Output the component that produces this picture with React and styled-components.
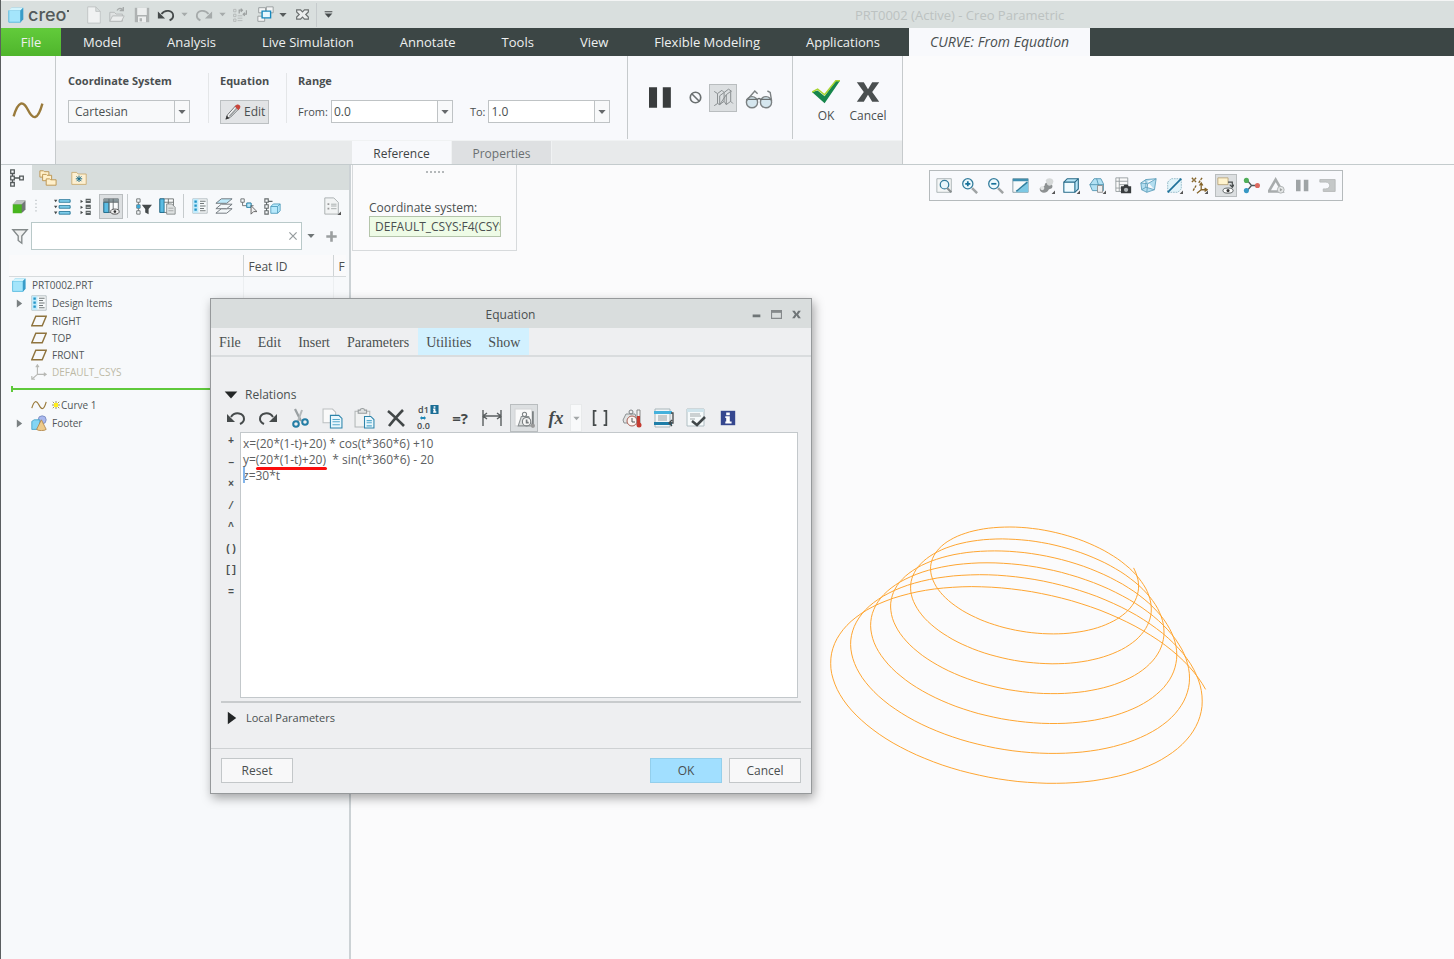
import React, { useState } from 'react';
import styled, { createGlobalStyle, css } from 'styled-components';

const GlobalStyle = createGlobalStyle`
  * {
    box-sizing: border-box;
  }

  body {
    margin: 0;
    background: #fbfbfc;
    color: #4a4f50;
    font-family: "Open Sans", "Noto Sans", sans-serif;
    font-size: 12px;
    line-height: 16px;
  }

  button, input, select, textarea {
    font: inherit;
    color: inherit;
    margin: 0;
    padding: 0;
    border-radius: 0;
    outline: none;
  }

  button {
    border: 0;
    background: none;
  }
`;

// all glyphs are drawn on a 20x20 grid
const glyphs = {
  cube: <><path d="M2 6l3-4h13v12l-3 4H2z" fill="#4fb7e0"/><path d="M2 5h13v13H2z" fill="#a4e5fb" stroke="#5cbbe0"/><path d="M2 5l3-3h13l-3 3z" fill="#d3f4fd"/><path d="M15 5l3-3v13l-3 3z" fill="#3a9cc8"/></>,
  file: <path d="M3 1h9l5 5v13H3zM12 1v5h5" fill="#f0f2f2" stroke="#bfc3c3"/>,
  open: <><path d="M2 17V7h5l2 2h7v8z" fill="#dfe2e2" stroke="#b4b8b8"/><path d="M2 17l3-6h13l-3 6z" fill="#ebeded" stroke="#b4b8b8"/><path d="M10 5c2-3 4-3 6-1M17 1v4h-4" fill="none" stroke="#a5a9a9" strokeWidth="1.5"/></>,
  save: <><path d="M1 1h18v18H1z" fill="#aeb2b2"/><path d="M4 1h12v9H4zM5 12h10v7H5z" fill="#eceeee"/><path d="M7 14h3v4H7z" fill="#aeb2b2"/></>,
  undo: <><path d="M5 9c4-6 13-4 13 2 0 3-2 4-4 5" fill="none" stroke="currentColor" strokeWidth="2"/><path d="M1 6v8h8z" fill="currentColor"/></>,
  redo: <><path d="M15 9C11 3 2 5 2 11c0 3 2 4 4 5" fill="none" stroke="currentColor" strokeWidth="2"/><path d="M19 6v8h-8z" fill="currentColor"/></>,
  regen: <><path d="M2 3h3v3H2zM2 9h3v3H2zM2 15h3v3H2zM7 11h6M7 14h6M7 17h6" fill="none" stroke="#b0b4b4"/><path d="M9 8V4h4M11 2l2 2-2 2M18 4v5h-4M16 7l-2 2 2 2" fill="none" stroke="#9da1a1" strokeWidth="1.5"/></>,
  windows: <><path d="M2 2h8v6H2zM11 1h8v7h-8zM1 12h8v6H1z" fill="#f4f5f5" stroke="#8f9596"/><path d="M6 6h10v8H6z" fill="#e9f8ff" stroke="#1688bd" strokeWidth="1.6"/></>,
  closeWin: <path d="M1 3h6l3 3 3-3h6v3l-4 4 4 4v3h-6l-3-3-3 3H1v-3l4-4-4-4z" fill="#eceeee" stroke="#6c7070" strokeWidth="1.8"/>,
  more: <path d="M3 4h14v2H3zM3 8h14l-7 8z" fill="#454a4b"/>,
  wave: <path d="M1 14C4 4 7 4 10 10s6 7 9-4" fill="none" stroke="#9a7b3c" strokeWidth="1.5"/>,
  pencil: <><path d="M2 18l2-5L13 3l4 3L7 16z" fill="#f5f5f5" stroke="#63686a"/><path d="M6 15L15 5" stroke="#9ba0a2" strokeWidth="2"/><path d="M12 4l2-2c2-1 5 1 4 3l-2 3z" fill="#c9463c"/><path d="M2 18l1-4 3 3z" fill="#333"/></>,
  pause: <path d="M0 1h7v18H0zM12 1h7v18h-7z" fill="currentColor"/>,
  no: <><circle cx="10" cy="10" r="7" fill="none" stroke="#6b7071" strokeWidth="2.2"/><path d="M5 5l10 10" stroke="#6b7071" strokeWidth="2.2"/></>,
  preview: <path d="M2 4l3 2v9l-3 2M5 6l4-3 2 2 4-3 3 2M7 16V8l4-3v8zM7 16l6-9v9l4-3V4M13 7l4-3M13 16l-2-3M17 13l2 2M5 15l2 1" fill="none" stroke="#898e90" strokeWidth="0.9"/>,
  glasses: <><circle cx="5" cy="13" r="4" fill="#d5e6ee" stroke="#7b8082"/><circle cx="15" cy="13" r="4" fill="#d5e6ee" stroke="#7b8082"/><path d="M1 11h8c0-1 2-1 2 0h8" fill="none" stroke="#6a6f71"/><path d="M1 12L7 5l2 2M19 12l-1-6-2-1" fill="none" stroke="#7b8082"/></>,
  check: <><path d="M0 10l4-1 5 4 8-11h3L9 18z" fill="#17864c"/><path d="M0 10l4-2 5 4 8-10h3" fill="none" stroke="#a7d52f" strokeWidth="1"/></>,
  cross: <path d="M2 3h5l3 5 3-5h5l-5 7 5 7h-5l-3-5-3 5H2l5-7z" fill="currentColor"/>,
  modelTree: <path d="M3 1h4v4H3zM3 8h4v4H3zM3 15h4v4H3zM5 5v3M5 12v3M7 10h6M13 8h4v4h-4z" fill="none" stroke="#53595a" strokeWidth="1.4"/>,
  folders: <g fill="#fff0cb" stroke="#ba924c"><path d="M1 2h4l1 1h5v6H1z"/><path d="M4 6h4l1 1h5v6H4z"/><path d="M8 11h4l1 1h6v6H8z"/></g>,
  favorites: <><path d="M1 3h6l2 2h10v13H1z" fill="#fdf0d2" stroke="#c5a467"/><path d="M10 7v8M6 11h8M7 8l6 6M13 8l-6 6" stroke="#176889" strokeWidth="1.2"/></>,
  greenCube: <><path d="M2 7l4-5h12v12l-4 4H2z" fill="#707675"/><path d="M1 7h12v12H1z" fill="#48b51f"/><path d="M1 7l5-5h12l-5 5z" fill="#bdc3c0"/></>,
  grip: <path d="M9 1h2v2H9zM9 6h2v2H9zM9 11h2v2H9zM9 16h2v2H9z" fill="#bcc2c5"/>,
  expand: <><path d="M0 2h4l-2 3zM0 9h4l-2 3zM0 16h4l-2 3z" fill="#454a4b"/><path d="M6 2h13v3H6zM6 9h13v3H6zM6 16h13v3H6z" fill="#8bd8f5" stroke="#176b8f"/></>,
  collapse: <><path d="M3 2v4l3-2zM3 9v4l3-2zM3 15v4l3-2z" fill="#454a4b"/><path d="M9 1h6v5H9zM9 8h6v5H9zM9 15h6v5H9z" fill="#5a6061"/><path d="M10 3h4M10 11h4M10 17h4" stroke="#e4e7e8"/></>,
  columns: <><path d="M1 1h17v16H1z" fill="#fbfcfc" stroke="#60686a"/><path d="M1 1h17v4H1z" fill="#89979b"/><path d="M1 5h6v12H1z" fill="#5cbce2" stroke="#176b8f"/><path d="M7 1v16M12 1v12M1 5h17" stroke="#60686a"/><ellipse cx="14" cy="16" rx="5" ry="3" fill="#eee" stroke="#444"/><circle cx="14" cy="16" r="1.5" fill="#333"/></>,
  treeFilter: <><path d="M2 1h4v4H2zM2 8h4v4H2zM2 15h4v4H2zM4 5v3M4 12v3" fill="none" stroke="#656b6c"/><path d="M2 8h4v4H2z" fill="#3ca8d5"/><path d="M8 8h12l-4 5v6l-4-2v-4z" fill="#454a4b"/></>,
  sheetCols: <><path d="M1 1h16v16H1z" fill="#fafbfb" stroke="#656b6c"/><path d="M1 1h5v16H1z" fill="#5cbce2" stroke="#176b8f"/><path d="M6 5h11M11 1v10" stroke="#656b6c"/><path d="M9 7h6l4 4v8H9z" fill="#dfe2e2" stroke="#7f8485"/><path d="M11 12h6M11 15h6" stroke="#9ea2a2"/></>,
  designItems: <><path d="M1 1h18v18H1z" fill="#f5f8f9" stroke="#aab4b7"/><path d="M1 1h7v18H1z" fill="#c2eafa"/><path d="M3 3h3v3H3zM3 8h3v3H3zM3 13h3v3H3z" fill="#2195c7"/><path d="M10 4h7M10 7h5M10 10h7M10 13h5M10 16h7" stroke="#73797b" strokeWidth="1.3"/></>,
  layers: <g fill="#f3f7f9" stroke="#6a7276"><path d="M1 18l6-5h12l-6 5z"/><path d="M1 13l6-5h12l-6 5z"/><path d="M1 7l6-5h12l-6 5z" fill="#bde9fa"/></g>,
  network: <><path d="M1 1h4v4H1zM8 6h5v5H8zM3 5v4h5M13 9h3" fill="none" stroke="#626869"/><path d="M8 6h5v5H8z" fill="#bce7f7" stroke="#218bb8"/><path d="M13 9v10l3-3h4z" fill="#eee" stroke="#555"/></>,
  treeCube: <><path d="M1 1h4v4H1zM1 8h4v4H1zM1 15h4v4H1zM3 5v3M3 12v3M5 4h5" fill="none" stroke="#656b6c" strokeWidth="1.3"/><path d="M8 10l3-3h8v8l-3 3H8z" fill="#b8eafc" stroke="#4b9bbb"/><path d="M8 10h8v8M16 10l3-3" fill="none" stroke="#4b9bbb"/></>,
  listDoc: <><path d="M2 1h10l5 5v13H2z" fill="#f2f4f4" stroke="#a6acad"/><path d="M5 7h2v2H5zM5 12h2v2H5z" fill="#999"/><path d="M9 8h6M9 10h6M9 13h6" stroke="#a2a8a8"/><path d="M20 16v4h-4z" fill="#555"/></>,
  funnel: <path d="M2 3h16l-6 7v8l-4-3v-5z" fill="#eff0f0" stroke="#83898a" strokeWidth="1.5"/>,
  plus: <path d="M8 2h4v6h6v4h-6v6H8v-6H2V8h6z" fill="currentColor"/>,
  clear: <path d="M4 4l12 12M16 4L4 16" stroke="#959b9d" strokeWidth="2"/>,
  down: <path d="M1 5h18l-9 10z" fill="currentColor"/>,
  right: <path d="M4 1v18l12-9z" fill="currentColor"/>,
  plane: <path d="M6 4h13l-5 12H1z" fill="none" stroke="#8f743e" strokeWidth="1.8"/>,
  csys: <path d="M8 2v11h10M8 13l-7 6M6 4l2-3 2 3M16 11l3 2-3 2M1 15v4h4" fill="none" stroke="#b7b8b4" strokeWidth="1.4"/>,
  spark: <><path d="M10 0v20M0 10h20M2 2l16 16M18 2L2 18" stroke="#8a8332" strokeWidth="2"/><path d="M5 5h10v10H5z" fill="#ffee1c"/></>,
  footer: <><circle cx="14" cy="6" r="5" fill="#a9b8ee" stroke="#7486bb"/><path d="M1 8l3-2h7v9l-3 3H1z" fill="#83d5f4" stroke="#3d9cc4"/><path d="M13 6l6 12c-2 2-10 2-12 0z" fill="#eecb8b" stroke="#ae8142"/></>,
  zoomFit: <><path d="M1 2h17v16H1z" fill="#f4f6f6" stroke="#a2abae"/><circle cx="10" cy="9" r="5" fill="#e8f6fb" stroke="#347d9d" strokeWidth="1.5"/><path d="M13 13l5 5" stroke="#8a8f90" strokeWidth="2.5"/></>,
  zoomIn: <><circle cx="8" cy="8" r="6" fill="#edf9fd" stroke="#347d9d" strokeWidth="1.5"/><path d="M8 5v6M5 8h6" stroke="#17719a" strokeWidth="2"/><path d="M13 13l6 6" stroke="#9fa3a4" strokeWidth="3"/></>,
  zoomOut: <><circle cx="8" cy="8" r="6" fill="#edf9fd" stroke="#347d9d" strokeWidth="1.5"/><path d="M5 8h6" stroke="#17719a" strokeWidth="2"/><path d="M13 13l6 6" stroke="#9fa3a4" strokeWidth="3"/></>,
  repaint: <><path d="M1 2h18v16H1z" fill="#f8fafb" stroke="#7d949e"/><path d="M1 2h18v3H1z" fill="#3f8fb0"/><path d="M4 18C7 17 13 12 19 5v13z" fill="#7cc8e4"/><path d="M5 17L18 6" stroke="#2f7f9f" strokeWidth="1.8"/></>,
  render: <><path d="M2 14c0-4 6-1 6-5s9-2 9 2-4 2-5 5-10 4-10-2z" fill="#8d9192"/><path d="M9 4c2-4 9-3 9 1s-4 7-7 4z" fill="#d6d9d9"/><circle cx="5" cy="13" r="2.5" fill="#e4e6e6"/><path d="M20 16v4h-4z" fill="#555"/></>,
  viewCube: <><path d="M1 6l4-4h13v12l-4 4H1z" fill="#b7e6f7" stroke="#286986" strokeWidth="1.3"/><path d="M1 6h13v12M14 6l4-4" fill="none" stroke="#286986" strokeWidth="1.3"/><path d="M2 7h11v10H2z" fill="#f2fbfe"/><path d="M20 16v4h-4z" fill="#555"/></>,
  orient: <><path d="M1 9l5-7h8l3 6v8H4z" fill="#b1e1f4" stroke="#4d91ad"/><path d="M1 9h16M9 2l2 7v7" fill="none" stroke="#4d91ad"/><path d="M10 10h6v8h-6z" fill="#efefef" stroke="#888"/><path d="M20 16v4h-4z" fill="#555"/></>,
  camera: <><path d="M1 1h14v16H1zM1 5h14M5 1v16M5 9h10M1 13h8" fill="#fafafa" stroke="#90979a"/><path d="M7 11h3l1-2h4l1 2h3v8H7z" fill="#383c3e"/><circle cx="13" cy="15" r="2.5" fill="#b0b5b7"/></>,
  perspective: <path d="M1 7l6-4 12-1-2 13-9 3-6-3zM1 7l8 1 10-6M9 8l-1 10M7 3v9l10 3M7 12l-5 3" fill="#b3def0" stroke="#5b9db9"/>,
  section: <><path d="M2 6l4-4h12v12l-4 4H2z" fill="#e2f4fa" stroke="#8bb3c2" strokeDasharray="2 1"/><path d="M2 18L18 2" stroke="#1e719a" strokeWidth="2"/><path d="M20 16v4h-4z" fill="#555"/></>,
  datum: <><path d="M1 1l5 5M6 1L1 6M13 1L9 7M6 10L2 17" stroke="#84642a" strokeWidth="1.6" strokeDasharray="3 1"/><path d="M12 8v7h6M12 15l-5 4M10 10l2-3 2 3M16 13l3 2-3 2" fill="none" stroke="#84642a" strokeWidth="1.5"/><path d="M20 16v4h-4z" fill="#555"/></>,
  annotation: <><path d="M1 1h12v8H1z" fill="#fff3ce" stroke="#b5a277"/><path d="M13 6h5v5M15 9l3 3 2-3" fill="none" stroke="#454a4b" strokeWidth="1.4"/><ellipse cx="13" cy="16" rx="6" ry="3" fill="#fff" stroke="#454a4b"/><circle cx="13" cy="16" r="1.8" fill="#333"/></>,
  spin: <><path d="M5 4l5 6-5 6M10 10h7" fill="none" stroke="#4d5759" strokeWidth="1.6"/><circle cx="4" cy="4" r="3" fill="#4fae59"/><circle cx="4" cy="16" r="3" fill="#3698c4"/><circle cx="17" cy="10" r="3" fill="#dc6a60"/></>,
  simulate: <><path d="M9 3l8 14H1z" fill="none" stroke="#a8acad" strokeWidth="3"/><circle cx="15" cy="15" r="4" fill="#e5e7e7" stroke="#a8acad"/><path d="M14 13v4l3-2z" fill="#9da1a1"/></>,
  exitSim: <path d="M1 3h18v14H5v-3h3c6 0 6-8 0-8H1z" fill="#c5c8c8" stroke="#b3b7b7"/>,
  cut: <><path d="M5 1l6 12" stroke="#9aa0a2" strokeWidth="2.2"/><path d="M12 2L8 13" stroke="#b3b8ba" strokeWidth="2"/><circle cx="6" cy="16" r="2.8" fill="none" stroke="#247da5" strokeWidth="2"/><circle cx="15" cy="14" r="2.8" fill="none" stroke="#247da5" strokeWidth="2"/></>,
  copy: <><path d="M1 1h9l3 3v10H1z" fill="#fafafa" stroke="#bcc0c1"/><path d="M8 7h8l3 3v9H8z" fill="#e8f7fd" stroke="#2c83aa"/><path d="M10 11h7M10 13h7M10 16h7" stroke="#56a9cb"/></>,
  paste: <><path d="M1 3h14v15H1z" fill="#f1f2f2" stroke="#b2b6b7"/><path d="M4 4V2h2c0-2 4-2 4 0h2v3H4z" fill="#dfe1e1" stroke="#979c9d"/><path d="M10 8h6l3 3v8h-9z" fill="#e8f7fd" stroke="#2c83aa"/><path d="M12 12h5M12 14h5M12 17h5" stroke="#56a9cb"/></>,
  remove: <path d="M2 3c5 4 10 9 16 15M17 2C11 8 7 13 3 18" fill="none" stroke="#424748" strokeWidth="2.6"/>,
  swap: <path d="M0 10l6-7v4h8V3l6 7-6 7v-4H6v4z" fill="#2189b8"/>,
  dim: <path d="M1 2v16M19 2v16M2 8h16M5 5L1 8l4 3M15 5l4 3-4 3" fill="none" stroke="#5a5f60" strokeWidth="1.4"/>,
  units: <><path d="M1 1h16v16H1z" fill="#fafafa" stroke="#d4d6d7"/><path d="M4 17l3-9h7l3 9z" fill="#dcdfdf" stroke="#8c9193"/><circle cx="10" cy="6" r="2" fill="none" stroke="#7d8284"/><circle cx="12" cy="13" r="4" fill="#f6f6f6" stroke="#777c7e"/><path d="M12 11v3h2M18 3v13" fill="none" stroke="#777c7e" strokeWidth="1.6"/><circle cx="18" cy="17" r="2" fill="#999"/></>,
  unitsRed: <><path d="M1 12l3-6h9l3 9H2z" fill="#e1e3e3" stroke="#8c9193"/><circle cx="9" cy="4" r="2" fill="none" stroke="#7d8284"/><circle cx="10" cy="13" r="5" fill="#fbf4f2" stroke="#a96055"/><path d="M10 10v4h3" fill="none" stroke="#555"/><path d="M15 2h3v15h-3z" fill="#f4f4f4" stroke="#888"/><path d="M15 8h3v7h-3z" fill="#c63a30"/><circle cx="17" cy="17" r="2.5" fill="#c63a30"/></>,
  brackets: <path d="M6 2H3v16h3M14 2h3v16h-3" fill="none" stroke="#454a4b" strokeWidth="2"/>,
  table: <><path d="M1 1h15v18H1z" fill="#f3f6f7" stroke="#a9b6bb"/><path d="M0 3h18v3H0z" fill="#44b1dc"/><path d="M0 14h18v3H0z" fill="#1f7ea8"/><path d="M4 8h9M4 10h9M4 12h9" stroke="#9aa1a3"/><path d="M17 5h2v10h-3M18 12l-3 3 3 3" fill="none" stroke="#454a4b" strokeWidth="1.3"/></>,
  verify: <><path d="M1 1h17v17H1z" fill="#f6fafb" stroke="#b0bec3"/><path d="M1 1h17v3H1z" fill="#cfe4ec"/><path d="M4 6h10M4 8h11M4 11h5" stroke="#a2a9ab"/><path d="M6 13l5 4 8-8" fill="none" stroke="#42484a" strokeWidth="2.6"/></>,
  info: <><path d="M2 2h16v16H2z" fill="#35478f"/><path d="M8 4h4v3H8zM7 8h5v6h2v2H7v-2h1v-4H7z" fill="#fff"/></>,
  infoTag: <><path d="M1 0h18v20H1z" fill="#1b6d95"/><path d="M8 3h4v3H8zM7 8h5v6h2v3H7v-3h1v-3H7z" fill="#fff"/></>,
  minimize: <path d="M3 10h14v5H3z" fill="#6f7577"/>,
  maximize: <><path d="M1 3h18v14H1z" fill="none" stroke="#85898b" strokeWidth="2"/><path d="M1 3h18v4H1z" fill="#85898b"/></>,
};

const Svg = styled.svg`
  display: block;
  flex: none;
  width: ${(p) => p.$size}px;
  height: ${(p) => p.$size}px;
`;

const Icon = ({ name, size = 18 }) => (
  <Svg viewBox="0 0 20 20" $size={size} aria-hidden="true">{glyphs[name]}</Svg>
);

const Page = styled.div`
  position: relative;
  display: flex;
  flex-direction: column;
  min-height: 100vh;
  border-left: 1px solid #5b5f60;
  overflow: hidden;
`;

const TitleBar = styled.header`
  display: flex;
  align-items: center;
  height: 28px;
  border-top: 1px solid #f4f5f5;
  background: #d9dfde;
`;

const QuickBar = styled.div`
  display: flex;
  align-items: center;
  flex: 0 0 854px;
  padding-left: 6px;
  color: #a6abab;
`;

const Brand = styled.div`
  display: flex;
  align-items: center;
  gap: 3px;
  width: 77px;
  color: #545a5b;
  font-family: Inter, sans-serif;
  font-size: 18px;
  font-weight: 500;
`;

const BrandDot = styled.span`
  width: 2px;
  height: 2px;
  margin: 0 0 7px -2px;
  background: #545a5b;
`;

const IconButton = styled.button`
  display: flex;
  align-items: center;
  justify-content: center;
  flex: none;
  width: ${(p) => p.$w || 22}px;
  height: ${(p) => p.$h || 22}px;
  color: ${(p) => p.$color || 'inherit'};
  ${(p) => p.$active && css`
    background: #dcdfe1;
    border: 1px solid #b9bdbf;
  `}
`;

const Divider = styled.span`
  flex: none;
  width: 1px;
  height: ${(p) => p.$h || 24}px;
  margin: 0 ${(p) => p.$gap || 0}px;
  background: #c6cbcd;
`;

const WindowTitle = styled.span`
  color: #bcc2c1;
  font-size: 13px;
`;

const TabBar = styled.nav`
  display: flex;
  height: 28px;
  background: #3c4645;
  font-size: 13px;
`;

const RibbonTab = styled.button`
  padding: 0 ${(p) => (p.$wide ? 29 : 24)}px 0 22px;
  color: #eef0f0;
  white-space: nowrap;
`;

const FileTab = styled(RibbonTab)`
  width: 60px;
  padding: 0;
  background: linear-gradient(to bottom, #62cb3b, #4fb52c);
`;

const ActiveTab = styled(RibbonTab)`
  width: 181px;
  padding: 0;
  background: #f8f9fc;
  color: #4a4f50;
  font-size: 14px;
  font-style: italic;
`;

const Ribbon = styled.section`
  display: flex;
  height: 109px;
  background: #fbfbfc;
  border-bottom: 1px solid #c4cbcd;
`;

const FeatureIcon = styled.div`
  display: flex;
  align-items: center;
  justify-content: center;
  width: 55px;
  background: #f8f9fc;
  border-right: 1px solid #c6cacc;
`;

const Dashboard = styled.div`
  display: flex;
  flex-direction: column;
  width: 847px;
  background: #f8f9fc;
  border-right: 1px solid #c6cacc;
`;

const DashboardRow = styled.div`
  display: flex;
  flex: 1;
`;

const Group = styled.div`
  width: ${(p) => p.$w}px;
  padding: 17px 0 0 ${(p) => p.$pad}px;
`;

const GroupTitle = styled.h2`
  margin: 0 0 11px;
  font-size: 11px;
  line-height: 16px;
`;

const Line = styled.div`
  display: flex;
  align-items: center;
  gap: 3px;

  label {
    font-size: 11px;
  }
`;

const SoftDivider = styled.span`
  width: 1px;
  height: 50px;
  margin-top: 17px;
  background: #e4e6e8;
`;

const Combo = styled.span`
  position: relative;
  display: flex;
  width: 122px;
  height: 23px;
  border: 1px solid #bfc3c5;
  background: ${(p) => p.$bg || '#fff'};

  input, select {
    flex: 1;
    min-width: 0;
    padding: 0 ${(p) => p.$pad || 2}px;
    border: 0;
    background: none;
    appearance: none;
  }
`;

const ComboArrow = styled.span`
  display: flex;
  align-items: center;
  justify-content: center;
  width: 15px;
  border-left: 1px solid #bfc3c5;
  background: #f8f9fa;
  color: #66696b;
  pointer-events: none;
`;

const ToLabel = styled.label`
  margin-left: 14px;
`;

const EditButton = styled.button`
  display: flex;
  align-items: center;
  gap: 2px;
  width: 49px;
  height: 24px;
  padding-left: 3px;
  background: #e2e4e6;
  border: 1px solid #bcc0c2;
`;

const Controls = styled.div`
  display: flex;
  align-items: center;
  width: ${(p) => p.$w}px;
  height: 83px;
  padding: 0 0 0 ${(p) => p.$pad}px;
  gap: 4px;
  border-left: 1px solid #c6cacc;
`;

const Confirm = styled.button`
  display: flex;
  flex-direction: column;
  align-items: center;
  gap: 2px;
  width: 38px;
  padding-top: 6px;
`;

const SubTabs = styled.div`
  display: flex;
  height: 24px;
  padding-left: 296px;
  border-top: 1px solid #f0f2f3;
  background: #e8eaeb;
`;

const SubTab = styled.button`
  width: 100px;
  padding-top: 2px;
  background: ${(p) => (p.$active ? '#f8f9fc' : '#dee0e2')};
  border-right: 1px solid #f0f2f3;
  color: ${(p) => (p.$active ? '#3f4445' : '#6a6f71')};
`;

const Workspace = styled.main`
  display: flex;
  flex: 1;
`;

const Side = styled.aside`
  display: flex;
  flex-direction: column;
  flex: 0 0 350px;
  background: #f7f9fb;
  border-right: 2px solid #ccd2d5;
`;

const SideTabs = styled.div`
  display: flex;
  height: 25px;
  background: #d7dddc;
`;

const SideTab = styled.button`
  display: flex;
  align-items: center;
  justify-content: center;
  width: 31px;
  background: ${(p) => (p.$active ? '#f7f9fb' : 'none')};
`;

const SideTools = styled.div`
  display: flex;
  align-items: center;
  height: 32px;
  padding: 0 4px 0 8px;
`;

const ToolGroup = styled.div`
  display: flex;
  align-items: center;
  gap: 2px;
  margin-left: ${(p) => p.$ml || 0}px;
`;

const FilterRow = styled.div`
  display: flex;
  align-items: center;
  height: 28px;
  padding-left: 8px;
  color: #6f7576;
`;

const FilterBox = styled.div`
  display: flex;
  align-items: center;
  width: 271px;
  height: 28px;
  background: #fff;
  border: 1px solid #b9c9c9;

  input {
    flex: 1;
    min-width: 0;
    padding: 0 6px;
    border: 0;
    background: none;
  }
`;

const TreeTable = styled.table`
  width: 337px;
  margin: 5px 0 0 8px;
  table-layout: fixed;
  border-collapse: collapse;

  th {
    height: 21px;
    padding: 4px 0 0 5px;
    background: #fafafb;
    border-bottom: 1px solid #d6dadc;
    font-size: 12px;
    font-weight: 400;
    text-align: left;
  }

  th + th {
    border-left: 1px solid #cfd4d6;
  }

  td {
    height: 17px;
    padding: 0;
  }

  td + td {
    border-left: 1px solid #eceff1;
  }
`;

const TreeRow = styled.tr`
  td {
    height: ${(p) => (p.$plane ? 17 : 18)}px;
  }
`;

const TreeLabel = styled.span`
  display: flex;
  align-items: center;
  gap: 5px;
  padding-left: ${(p) => p.$indent}px;
  color: ${(p) => (p.$muted ? '#bdb9a6' : '#505657')};
  font-size: 10px;
  line-height: 16px;
  white-space: nowrap;
`;

const Twisty = styled.span`
  display: flex;
  width: 11px;
  color: #7a8082;
`;

const NewMark = styled.span`
  display: flex;
  gap: 1px;
  align-items: center;
`;

const InsertBar = styled.td`
  && {
    height: 15px;
  }

  &::after {
    content: "";
    display: block;
    height: 6px;
    margin-left: 2px;
    border-left: 2px solid #5fc93b;
    background: linear-gradient(#5fc93b, #5fc93b) center / 100% 2px no-repeat;
  }
`;

const Viewport = styled.section`
  position: relative;
  flex: 1;
`;

const ReferencePanel = styled.div`
  width: 165px;
  height: 86px;
  margin-left: 1px;
  padding: 4px 16px 0;
  background: #fbfbfc;
  border: 1px solid #d7dadc;
  border-top: 0;
`;

const Handle = styled.div`
  width: 18px;
  margin: 2px auto 27px;
  border-top: 2px dotted #b4b8ba;
`;

const ReferenceInput = styled.input`
  display: block;
  width: 132px;
  height: 21px;
  padding: 0 0 0 5px;
  background: #eefbe6;
  border: 1px solid #b5c5ab;
`;

const ViewTools = styled.div`
  position: absolute;
  top: 5px;
  left: 578px;
  display: flex;
  align-items: center;
  justify-content: space-between;
  width: 414px;
  height: 31px;
  padding: 0 3px;
  background: #f8f9fc;
  border: 1px solid #b5babc;
  color: #9fa4a6;
`;

const CurveView = styled.svg`
  position: absolute;
  top: 345px;
  left: 469px;
  width: 400px;
  height: 290px;
`;

const Dialog = styled.section`
  position: absolute;
  top: 298px;
  left: 209px;
  width: 602px;
  background: #eeeff1;
  border: 1px solid #96999b;
  box-shadow: 2px 4px 10px rgba(0, 0, 0, 0.35);
`;

const DialogTitle = styled.div`
  display: flex;
  align-items: center;
  height: 29px;
  padding: 2px 5px 0 64px;
  background: #d9dddd;
  color: #6f7577;

  h1 {
    flex: 1;
    margin: 0;
    color: #4a4f50;
    font-size: 12px;
    font-weight: 400;
    text-align: center;
  }
`;

const MenuBar = styled.div`
  display: flex;
  height: 29px;
  border-bottom: 2px solid #d9dcde;
  font-family: "Liberation Serif", serif;
  font-size: 14px;
`;

const MenuButton = styled.button`
  padding: 2px 9px 0 8px;
  background: ${(p) => (p.$hot ? '#d2f1ff' : 'none')};
`;

const SectionTitle = styled.button`
  display: flex;
  align-items: center;
  gap: 7px;
  height: 16px;
  margin: ${(p) => p.$top}px 0 0 13px;

  svg {
    color: #232627;
  }
`;

const EditTools = styled.div`
  display: flex;
  align-items: center;
  gap: 4px;
  height: 28px;
  margin: 1px 0 0 11px;
  color: #454a4b;
`;

const SplitButton = styled.span`
  display: flex;
`;

const ListArrow = styled(IconButton)`
  background: #f8f9fa;
  border: 1px solid #e8eaeb;
`;

const Formula = styled.span`
  font-family: "Liberation Serif", serif;
  font-size: 18px;
  font-style: italic;
  font-weight: 700;
`;

const Query = styled.span`
  font-size: 15px;
  font-weight: 700;
`;

const Values = styled.span`
  display: flex;
  flex-direction: column;
  align-items: center;
  font-size: 9px;
  font-weight: 600;
  line-height: 10px;
`;

const Tag = styled.span`
  align-self: flex-start;
`;

const EditorRow = styled.div`
  display: flex;
  padding: 0 13px 0 11px;
`;

const Operators = styled.div`
  display: flex;
  flex-direction: column;
  justify-content: space-between;
  width: 18px;
  height: 171px;

  button {
    height: 20px;
    font-family: "Liberation Mono", monospace;
    font-size: 10px;
    font-weight: 700;
  }
`;

const Editor = styled.div`
  position: relative;
  flex: 1;
  height: 266px;

  textarea {
    display: block;
    width: 100%;
    height: 100%;
    padding: 3px 2px;
    border: 1px solid #c3c8cb;
    background: #fff;
    color: #5c6061;
    resize: none;
  }
`;

const Marker = styled.span`
  position: absolute;
  top: 35px;
  left: 16px;
  width: 71px;
  height: 3px;
  border-radius: 2px;
  background: #fb0d0d;
`;

const Caret = styled.span`
  position: absolute;
  top: 35px;
  left: 3px;
  width: 2px;
  height: 16px;
  background: #83b5ea;
`;

const LocalSection = styled.div`
  height: 47px;
  margin: 3px 10px 0;
  border-top: 2px solid #c8cbcd;

  button {
    margin-left: 4px;
    font-size: 11px;
  }
`;

const DialogFooter = styled.div`
  display: flex;
  gap: 7px;
  padding: 9px 10px 10px;
  border-top: 1px solid #ced1d3;
`;

const FooterButton = styled.button`
  width: 72px;
  height: 25px;
  background: ${(p) => (p.$primary ? '#a1dfff' : '#f8f8f9')};
  border: 1px solid ${(p) => (p.$primary ? '#93cfec' : '#c3c7c9')};
  margin-right: ${(p) => (p.$first ? 'auto' : 0)};
`;

const ribbonTabs = ['Model', 'Analysis', 'Live Simulation', 'Annotate', 'Tools', 'View', 'Flexible Modeling', 'Applications'];
const viewTools = ['zoomFit', 'zoomIn', 'zoomOut', 'repaint', 'render', 'viewCube', 'orient', 'camera', 'perspective', 'section', 'datum', 'annotation', 'spin', 'simulate', 'pause', 'exitSim'];
const menus = ['File', 'Edit', 'Insert', 'Parameters', 'Utilities', 'Show'];
const operators = ['+', '−', '×', '/', '^', '()', '[]', '='];
const planes = ['RIGHT', 'TOP', 'FRONT'];

const relations = `x=(20*(1-t)+20) * cos(t*360*6) +10
y=(20*(1-t)+20)  * sin(t*360*6) - 20
z=30*t`;

// projects the conical helix onto the view: six turns, radius 40 down to 20
const curvePoints = () => {
  const points = [];
  for (let i = 0; i <= 720; i++) {
    const t = i / 720;
    const r = 20 * (1 - t) + 20;
    const c = Math.cos(t * 12 * Math.PI) * r;
    const s = Math.sin(t * 12 * Math.PI) * r;
    const x = 198 + 4.69 * c - 1.45 * s + 21.75 * t;
    const y = 187.4 - 0.2 * c - 2.69 * s - 125.5 * t;
    points.push(`${x.toFixed(1)},${y.toFixed(1)}`);
  }
  return points.join(' ');
};

const ComboInput = ({ id, value, onChange }) => (
  <Combo>
    <input id={id} value={value} onChange={onChange} />
    <ComboArrow><Icon name="down" size={8} /></ComboArrow>
  </Combo>
);

function App() {
  const [from, setFrom] = useState('0.0');
  const [to, setTo] = useState('1.0');
  const [filter, setFilter] = useState('');
  const [csys, setCsys] = useState('DEFAULT_CSYS:F4(CSYS)');
  const [text, setText] = useState(relations);

  return (
    <>
      <GlobalStyle />
      <Page>
        <TitleBar>
          <QuickBar>
            <Brand><Icon name="cube" size={18} />creo<BrandDot /></Brand>
            <IconButton aria-label="New" $w={20}><Icon name="file" /></IconButton>
            <IconButton aria-label="Open" $w={26}><Icon name="open" /></IconButton>
            <IconButton aria-label="Save" $w={24}><Icon name="save" size={16} /></IconButton>
            <IconButton aria-label="Undo" $w={24} $color="#454a4b"><Icon name="undo" /></IconButton>
            <IconButton aria-label="Undo list" $w={12}><Icon name="down" size={7} /></IconButton>
            <IconButton aria-label="Redo" $w={27}><Icon name="redo" /></IconButton>
            <IconButton aria-label="Redo list" $w={10}><Icon name="down" size={7} /></IconButton>
            <IconButton aria-label="Regenerate" $w={26}><Icon name="regen" size={16} /></IconButton>
            <IconButton aria-label="Windows" $w={24}><Icon name="windows" size={17} /></IconButton>
            <IconButton aria-label="Window list" $w={12} $color="#565b5c"><Icon name="down" size={8} /></IconButton>
            <IconButton aria-label="Close" $w={27}><Icon name="closeWin" size={13} /></IconButton>
            <Divider />
            <IconButton aria-label="Customize"><Icon name="more" size={11} /></IconButton>
          </QuickBar>
          <WindowTitle>PRT0002 (Active) - Creo Parametric</WindowTitle>
        </TitleBar>

        <TabBar>
          <FileTab>File</FileTab>
          {ribbonTabs.map((tab) => (
            <RibbonTab key={tab} $wide={tab === 'Applications'}>{tab}</RibbonTab>
          ))}
          <ActiveTab>CURVE: From Equation</ActiveTab>
        </TabBar>

        <Ribbon>
          <FeatureIcon><Icon name="wave" size={32} /></FeatureIcon>
          <Dashboard>
            <DashboardRow>
              <Group $w={152} $pad={12}>
                <GroupTitle>Coordinate System</GroupTitle>
                <Combo $bg="#f8f9fa" $pad={6}>
                  <select aria-label="Coordinate System" defaultValue="Cartesian">
                    <option>Cartesian</option>
                    <option>Cylindrical</option>
                    <option>Spherical</option>
                  </select>
                  <ComboArrow><Icon name="down" size={8} /></ComboArrow>
                </Combo>
              </Group>
              <SoftDivider />
              <Group $w={77} $pad={11}>
                <GroupTitle>Equation</GroupTitle>
                <EditButton><Icon name="pencil" size={18} />Edit</EditButton>
              </Group>
              <SoftDivider />
              <Group $w={340} $pad={11}>
                <GroupTitle>Range</GroupTitle>
                <Line>
                  <label htmlFor="from">From:</label>
                  <ComboInput id="from" value={from} onChange={(e) => setFrom(e.target.value)} />
                  <ToLabel htmlFor="to">To:</ToLabel>
                  <ComboInput id="to" value={to} onChange={(e) => setTo(e.target.value)} />
                </Line>
              </Group>
              <Controls $w={165} $pad={11}>
                <IconButton aria-label="Pause" $w={42} $color="#393c3d"><Icon name="pause" size={23} /></IconButton>
                <IconButton aria-label="No preview" $w={20}><Icon name="no" size={15} /></IconButton>
                <IconButton aria-label="Preview" $w={28} $h={28} $active><Icon name="preview" size={22} /></IconButton>
                <IconButton aria-label="Verify" $w={35}><Icon name="glasses" size={28} /></IconButton>
              </Controls>
              <Controls $w={110} $pad={14}>
                <Confirm><Icon name="check" size={28} />OK</Confirm>
                <Confirm><Icon name="cross" size={28} />Cancel</Confirm>
              </Controls>
            </DashboardRow>
            <SubTabs>
              <SubTab $active>Reference</SubTab>
              <SubTab>Properties</SubTab>
            </SubTabs>
          </Dashboard>
        </Ribbon>

        <Workspace>
          <Side>
            <SideTabs>
              <SideTab $active aria-label="Model Tree"><Icon name="modelTree" /></SideTab>
              <SideTab aria-label="Folder Browser"><Icon name="folders" /></SideTab>
              <SideTab aria-label="Favorites"><Icon name="favorites" size={16} /></SideTab>
            </SideTabs>
            <SideTools>
              <IconButton aria-label="Model" $w={20}><Icon name="greenCube" size={15} /></IconButton>
              <Icon name="grip" size={14} />
              <ToolGroup $ml={8}>
                <IconButton aria-label="Expand all"><Icon name="expand" size={17} /></IconButton>
                <IconButton aria-label="Collapse all"><Icon name="collapse" size={17} /></IconButton>
                <IconButton aria-label="Tree columns" $w={24} $h={25} $active><Icon name="columns" size={17} /></IconButton>
              </ToolGroup>
              <Divider $gap={4} />
              <ToolGroup>
                <IconButton aria-label="Tree filters"><Icon name="treeFilter" size={17} /></IconButton>
                <IconButton aria-label="Column setup"><Icon name="sheetCols" size={17} /></IconButton>
              </ToolGroup>
              <Divider $gap={5} />
              <ToolGroup>
                <IconButton aria-label="Design items"><Icon name="designItems" size={16} /></IconButton>
                <IconButton aria-label="Layers"><Icon name="layers" /></IconButton>
                <IconButton aria-label="References"><Icon name="network" size={17} /></IconButton>
                <IconButton aria-label="Bodies"><Icon name="treeCube" size={17} /></IconButton>
              </ToolGroup>
              <ToolGroup $ml={38}>
                <IconButton aria-label="Settings"><Icon name="listDoc" size={18} /></IconButton>
              </ToolGroup>
            </SideTools>
            <FilterRow>
              <IconButton aria-label="Filter"><Icon name="funnel" size={18} /></IconButton>
              <FilterBox>
                <input aria-label="Filter tree" value={filter} onChange={(e) => setFilter(e.target.value)} />
                <IconButton aria-label="Clear" $w={17}><Icon name="clear" size={12} /></IconButton>
              </FilterBox>
              <IconButton aria-label="Filter options" $w={18}><Icon name="down" size={8} /></IconButton>
              <IconButton aria-label="Add" $color="#9b9fa0"><Icon name="plus" size={13} /></IconButton>
            </FilterRow>
            <TreeTable>
              <colgroup>
                <col style={{ width: 234 }} />
                <col style={{ width: 90 }} />
                <col />
              </colgroup>
              <thead>
                <tr><th aria-label="Name" /><th>Feat ID</th><th>F</th></tr>
              </thead>
              <tbody>
                <TreeRow><td><TreeLabel $indent={2}><Icon name="cube" size={16} />PRT0002.PRT</TreeLabel></td><td /><td /></TreeRow>
                <TreeRow>
                  <td><TreeLabel $indent={6}><Twisty><Icon name="right" size={9} /></Twisty><Icon name="designItems" size={16} />Design Items</TreeLabel></td>
                  <td /><td />
                </TreeRow>
                {planes.map((name) => (
                  <TreeRow key={name} $plane><td><TreeLabel $indent={22}><Icon name="plane" size={16} />{name}</TreeLabel></td><td /><td /></TreeRow>
                ))}
                <TreeRow><td><TreeLabel $indent={22} $muted><Icon name="csys" size={16} />DEFAULT_CSYS</TreeLabel></td><td /><td /></TreeRow>
                <tr><InsertBar colSpan={3} /></tr>
                <TreeRow><td><TreeLabel $indent={22}><Icon name="wave" size={16} /><NewMark><Icon name="spark" size={8} />Curve 1</NewMark></TreeLabel></td><td /><td /></TreeRow>
                <TreeRow>
                  <td><TreeLabel $indent={6}><Twisty><Icon name="right" size={9} /></Twisty><Icon name="footer" size={16} />Footer</TreeLabel></td>
                  <td /><td />
                </TreeRow>
              </tbody>
            </TreeTable>
          </Side>

          <Viewport>
            <ReferencePanel>
              <Handle />
              <label htmlFor="csys">Coordinate system:</label>
              <ReferenceInput id="csys" value={csys} onChange={(e) => setCsys(e.target.value)} />
            </ReferencePanel>
            <ViewTools>
              {viewTools.map((name) => (
                <IconButton key={name} aria-label={name} $h={23} $active={name === 'annotation'}>
                  <Icon name={name} size={name === 'pause' ? 13 : 17} />
                </IconButton>
              ))}
            </ViewTools>
            <CurveView viewBox="0 0 400 290" aria-label="Curve preview">
              <polyline points={curvePoints()} fill="none" stroke="#ffa632" strokeWidth="1" />
            </CurveView>
          </Viewport>
        </Workspace>

        <Dialog role="dialog" aria-label="Equation">
          <DialogTitle>
            <h1>Equation</h1>
            <IconButton aria-label="Minimize" $w={20}><Icon name="minimize" size={11} /></IconButton>
            <IconButton aria-label="Maximize" $w={20}><Icon name="maximize" size={11} /></IconButton>
            <IconButton aria-label="Close" $w={20}><Icon name="cross" size={11} /></IconButton>
          </DialogTitle>
          <MenuBar>
            {menus.map((name) => (
              <MenuButton key={name} $hot={name === 'Utilities' || name === 'Show'}>{name}</MenuButton>
            ))}
          </MenuBar>
          <SectionTitle $top={30}><Icon name="down" size={14} />Relations</SectionTitle>
          <EditTools>
            <IconButton aria-label="Undo" $w={28}><Icon name="undo" size={20} /></IconButton>
            <IconButton aria-label="Redo" $w={28}><Icon name="redo" size={20} /></IconButton>
            <IconButton aria-label="Cut" $w={28}><Icon name="cut" size={20} /></IconButton>
            <IconButton aria-label="Copy" $w={28}><Icon name="copy" size={21} /></IconButton>
            <IconButton aria-label="Paste" $w={28}><Icon name="paste" size={21} /></IconButton>
            <IconButton aria-label="Delete" $w={28}><Icon name="remove" size={20} /></IconButton>
            <IconButton aria-label="Switch dimensions" $w={28} $h={26}>
              <Values><span>d1</span><Icon name="swap" size={6} /><span>0.0</span></Values>
              <Tag><Icon name="infoTag" size={9} /></Tag>
            </IconButton>
            <IconButton aria-label="Evaluate" $w={28}><Query>=?</Query></IconButton>
            <IconButton aria-label="Dimension" $w={28}><Icon name="dim" size={20} /></IconButton>
            <IconButton aria-label="Units" $w={28} $h={28} $active><Icon name="units" size={21} /></IconButton>
            <SplitButton>
              <IconButton aria-label="Insert function" $w={28} $h={28}><Formula>fx</Formula></IconButton>
              <ListArrow aria-label="Function list" $w={12} $h={28} $color="#a3a7a8"><Icon name="down" size={7} /></ListArrow>
            </SplitButton>
            <IconButton aria-label="Brackets" $w={28}><Icon name="brackets" size={18} /></IconButton>
            <IconButton aria-label="Unit conversion" $w={28}><Icon name="unitsRed" size={20} /></IconButton>
            <IconButton aria-label="Parameters" $w={28}><Icon name="table" size={20} /></IconButton>
            <IconButton aria-label="Verify" $w={28}><Icon name="verify" size={20} /></IconButton>
            <IconButton aria-label="Info" $w={28}><Icon name="info" size={18} /></IconButton>
          </EditTools>
          <EditorRow>
            <Operators>
              {operators.map((op) => <button key={op}>{op}</button>)}
            </Operators>
            <Editor>
              <textarea aria-label="Relations" spellCheck={false} value={text} onChange={(e) => setText(e.target.value)} />
              <Marker />
              <Caret />
            </Editor>
          </EditorRow>
          <LocalSection>
            <SectionTitle $top={7}><Icon name="right" size={14} />Local Parameters</SectionTitle>
          </LocalSection>
          <DialogFooter>
            <FooterButton $first>Reset</FooterButton>
            <FooterButton $primary>OK</FooterButton>
            <FooterButton>Cancel</FooterButton>
          </DialogFooter>
        </Dialog>
      </Page>
    </>
  );
}

export default App;
